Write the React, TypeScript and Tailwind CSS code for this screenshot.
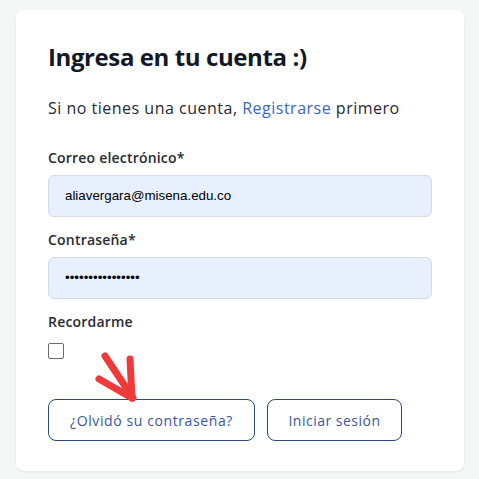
import React from "react";

const RedArrow = () => (
  <svg
    className="absolute left-[46px] -top-[49px] pointer-events-none"
    width="50"
    height="52"
    viewBox="0 0 50 52"
    fill="none"
    stroke="#f03a3a"
    strokeWidth="7"
    strokeLinecap="round"
  >
    <path d="M11 6 L39 48" />
    <path d="M36 9 L38 48" />
    <path d="M5 29 L38 48" />
  </svg>
);

const App = () => {
  return (
    <div className="w-[479px] h-[479px] bg-[#f3f8f7] pt-[10px] pl-4 font-['Open_Sans',sans-serif]">
      <div className="w-[448px] h-[461px] bg-white rounded-lg shadow-[0_1px_3px_rgba(0,0,0,0.08)] px-8 pt-[29px]">
        <h1 className="text-[24px] font-bold text-[#111827] tracking-[-0.4px] leading-9">
          Ingresa en tu cuenta :)
        </h1>
        <p className="mt-[21px] text-[16px] text-[#1f2937] leading-6 tracking-[0.5px]">
          Si no tienes una cuenta, <span className="text-[#3b66c8]">Registrarse</span> primero
        </p>

        <label className="block mt-[28px] text-[14px] font-semibold text-[#262b33] leading-5 tracking-[0.2px]">
          Correo electrónico*
        </label>
        <div className="mt-[7px] w-[384px] h-[42px] rounded-md border border-[#d5dbe6] bg-[#e8f0fe] flex items-center pl-4 font-['Liberation_Sans',Arial,sans-serif] text-[13.33px] text-black">
          aliavergara@misena.edu.co
        </div>

        <label className="block mt-[13px] text-[14px] font-semibold text-[#262b33] leading-5 tracking-[0.2px]">
          Contraseña*
        </label>
        <div className="mt-[7px] w-[384px] h-[42px] rounded-md border border-[#d5dbe6] bg-[#e8f0fe] flex items-center pl-4 font-['Liberation_Sans',Arial,sans-serif] text-[13.33px] text-black">
          ••••••••••••••••
        </div>

        <label className="block mt-[13px] text-[14px] font-semibold text-[#262b33] leading-5 tracking-[0.2px]">
          Recordarme
        </label>
        <div className="mt-[11px] w-4 h-4 border border-[#6b6b6b] rounded-[2px] bg-white" />

        <div className="relative mt-[40px] flex gap-[12px]">
          <RedArrow />
          <button className="w-[207px] h-[42px] rounded-lg border border-[#2c4a7c] text-[14px] font-medium text-[#3a56a0] tracking-[0.6px]">
            ¿Olvidó su contraseña?
          </button>
          <button className="w-[135px] h-[42px] rounded-lg border border-[#2c4a7c] text-[14px] font-medium text-[#3a56a0] tracking-[0.5px]">
            Iniciar sesión
          </button>
        </div>
      </div>
    </div>
  );
};

export default App;
